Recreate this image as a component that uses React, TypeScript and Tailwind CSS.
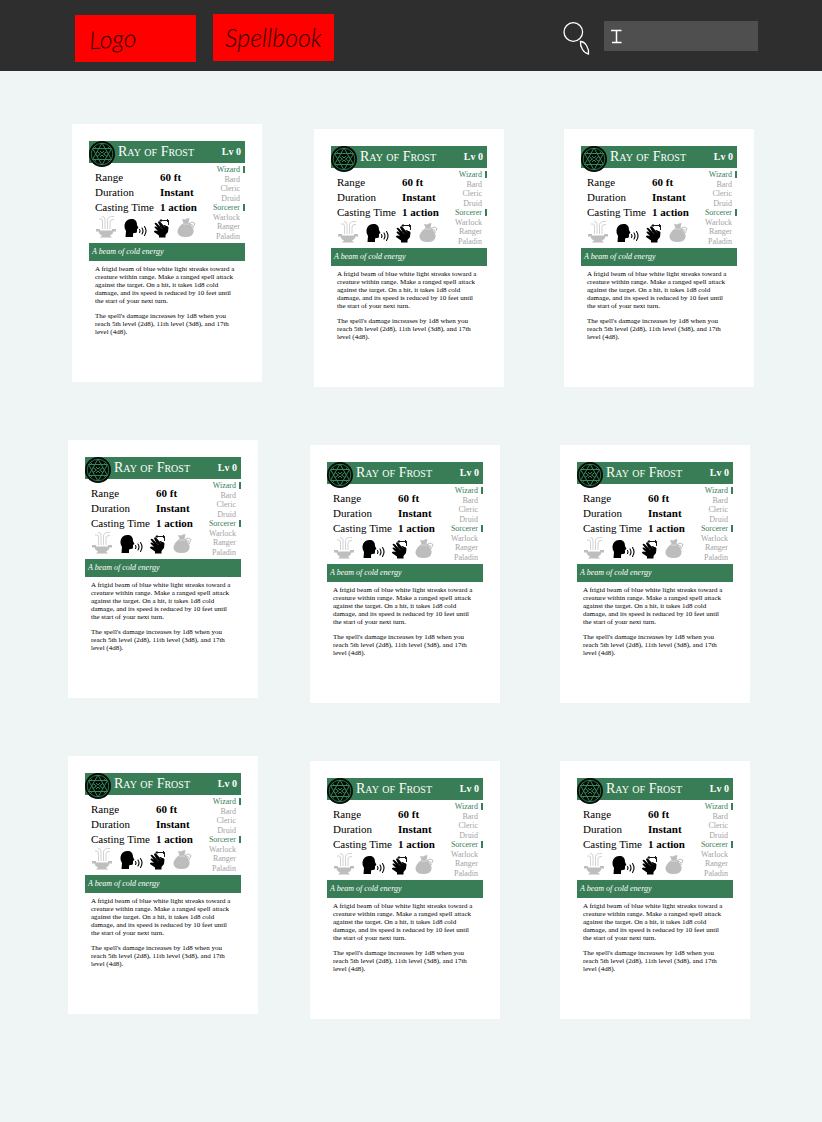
import React from "react";

type Spell = {
  name: string;
  level: number;
  facts: [string, string][];
  classes: { name: string; active: boolean }[];
  tagline: string;
  description: string[];
};

const activeClasses = ["Wizard", "Sorcerer"];

const rayOfFrost: Spell = {
  name: "Ray of Frost",
  level: 0,
  facts: [
    ["Range", "60 ft"],
    ["Duration", "Instant"],
    ["Casting Time", "1 action"],
  ],
  classes: ["Wizard", "Bard", "Cleric", "Druid", "Sorcerer", "Warlock", "Ranger", "Paladin"].map(
    (name) => ({ name, active: activeClasses.includes(name) }),
  ),
  tagline: "A beam of cold energy",
  description: [
    "A frigid beam of blue white light streaks toward a\ncreature within range. Make a ranged spell attack\nagainst the target. On a hit, it takes 1d8 cold\ndamage, and its speed is reduced by 10 feet until\nthe start of your next turn.",
    "The spell's damage increases by 1d8 when you\nreach 5th level (2d8), 11th level (3d8), and 17th\nlevel (4d8).",
  ],
};

function Emblem() {
  return (
    <svg viewBox="0 0 26 26" className="h-[26px] w-[26px] shrink-0" aria-hidden="true">
      <circle cx="13" cy="13" r="13" fill="#050c08" />
      <g fill="none" stroke="#37865a" strokeWidth="1">
        <circle cx="13" cy="13" r="10.8" strokeWidth="0.8" />
        <path d="M13 2L22.500 18.500H3.500ZM13 24L3.500 7.500H22.500Z" />
        <path d="M8 10.500L11.500 13L8 15.500M18 10.500L14.500 13L18 15.500M11 10L13 12L15 10M11 16L13 14L15 16" />
        <path d="M5 5L7 7M21 5L19 7M5 21L7 19M21 21L19 19" strokeWidth="0.8" />
      </g>
    </svg>
  );
}

function BowlIcon() {
  return (
    <svg viewBox="0 0 22 23" className="h-[23px] w-[22px]" aria-hidden="true">
      <path d="M1 14H5V15.500H17V14H21V16.500H18.500Q18 19.500 15 20.500L17 22.500H5L7 20.500Q4 19.500 3.500 16.500H1Z" fill="#bebebe" />
      <g fill="none" stroke="#d2d2d2" strokeWidth="1">
        <path d="M7.500 14V6Q7.500 3 4 4M10 14V4Q10 1.500 7 1.500M12.500 14V4.500Q13 1 19 1.500M15 14V7Q15 4 19 4.500" />
      </g>
    </svg>
  );
}

function VoiceIcon() {
  return (
    <svg viewBox="0 0 23 20" className="h-[20px] w-[23px]" aria-hidden="true">
      <path d="M7 1C11 .5 13 3 13 7L14.500 10L13 11V13.500Q13 15.500 9.500 15L9 16.500V19H1.500L2 13Q0 10.500 .5 7Q1.500 1.500 7 1Z" fill="#000" />
      <g fill="none" stroke="#000" strokeWidth="1.100" strokeLinecap="round">
        <path d="M15.500 11.500Q16.500 13 15.500 14.500M18 10Q20 13 18 16M20.500 8.500Q23.500 13 20.500 17.500" />
      </g>
    </svg>
  );
}

function HandIcon() {
  return (
    <svg viewBox="0 0 17 20" className="h-[20px] w-[17px]" aria-hidden="true">
      <path d="M1.500 5.500Q2.500 4 4 5.500L7.500 9L5 4.500Q5.500 2.500 7 3.500L10.500 7.500Q12 6.500 13 8Q15 7.500 15.500 9.500L15 14L12.500 17V19.500H6V17.500L1 14Q.5 12.500 2.500 12.500L5 13L1.500 9.500Q1.500 8 3 8.500L5 10Z" fill="#000" />
      <path d="M7 2.500H15.500M8.500 1L7 2.500L8.500 4M14 1L15.500 2.500L14 4M15.500 3V7" fill="none" stroke="#000" strokeWidth="0.900" />
      <path d="M7.500 9L9.500 11M10.500 7.500L12 9.500" fill="none" stroke="#888" strokeWidth="0.500" />
    </svg>
  );
}

function PouchIcon() {
  return (
    <svg viewBox="0 0 20 21" className="h-[21px] w-[20px]" aria-hidden="true">
      <path d="M5 2L8 2.500L10 1.500L12.500 1L11.500 6Q17 10 16.500 15Q16 20 8.500 20T.5 15Q.5 10 6.500 6Z" fill="#bdbdbd" />
      <path d="M6 6.500H12L15 5L18 6.500L17 9M12 6.500L15.500 8L16.500 11" fill="none" stroke="#b5b5b5" strokeWidth="0.900" />
      <path d="M6 7H12" stroke="#ececec" strokeWidth="0.700" />
    </svg>
  );
}

function SpellCard({ spell, className = "" }: { spell: Spell; className?: string }) {
  return (
    <article
      className={`flex min-h-[258px] w-[190px] shrink-0 flex-col bg-white px-[17px] pt-[17px] font-['Liberation_Serif',serif] ${className}`}
    >
      <header className="flex h-[22px] items-start bg-[#397d56] text-white">
        <Emblem />
        <h2 className="ml-[3px] flex-1 whitespace-nowrap text-[14px] leading-[21px] [font-variant-caps:small-caps]">
          {spell.name}
        </h2>
        <span className="pr-1 text-[10px] font-bold leading-[21px]">Lv {spell.level}</span>
      </header>

      <div className="flex h-[80px] justify-between">
        <div className="flex flex-col pl-[6px]">
          <dl className="mt-[7px] grid grid-cols-[65px_auto] text-[11px] leading-[15px] text-black">
            {spell.facts.map(([label, value]) => (
              <React.Fragment key={label}>
                <dt className="whitespace-nowrap">{label}</dt>
                <dd className="whitespace-nowrap font-bold">{value}</dd>
              </React.Fragment>
            ))}
          </dl>
          <div className="flex w-[102px] items-end justify-between">
            <BowlIcon />
            <VoiceIcon />
            <HandIcon />
            <PouchIcon />
          </div>
        </div>
        <ul className="flex flex-col items-end pb-[2px] pt-[2px] text-[8px]">
          {spell.classes.map(({ name, active }) => (
            <li
              key={name}
              className={
                active
                  ? "flex flex-1 items-center gap-[3px] leading-[9px] text-[#397d56]"
                  : "flex flex-1 items-center gap-[3px] leading-[9px] text-[#a3a3a3]"
              }
            >
              {name}
              <span className={active ? "h-[7px] w-[2px] bg-[#397d56]" : "h-[7px] w-[2px]"} />
            </li>
          ))}
        </ul>
      </div>

      <p className="h-[18px] bg-[#397d56] pl-[3px] text-[8px] italic leading-[18px] text-white">
        {spell.tagline}
      </p>

      <div className="flex flex-col gap-[7px] whitespace-pre pl-[6px] pt-1 text-[7px] leading-[8px] text-black">
        {spell.description.map((paragraph) => (
          <p key={paragraph}>{paragraph}</p>
        ))}
      </div>
    </article>
  );
}

function TopBar() {
  return (
    <header className="flex h-[71px] items-start justify-between bg-[#2e2e2e] pl-[75px] pr-16 font-['Lato',sans-serif]">
      <nav className="flex gap-[17px] pt-[14px]">
        <a href="#home" className="mt-px flex h-[47px] w-[121px] items-center bg-[#ff0000] pl-[14px] text-[25px] font-light italic text-[#300000]">
          <span className="-rotate-3">Logo</span>
        </a>
        <a href="#spellbook" className="flex h-[47px] w-[121px] items-center justify-center bg-[#ff0000] text-[25px] font-light italic text-[#300000]">
          Spellbook
        </a>
      </nav>
      <form role="search" className="flex items-start gap-[14px] pt-[21px]">
        <svg viewBox="0 0 27 35" className="h-[35px] w-[27px]" fill="none" stroke="#fff" strokeWidth="1.300" aria-hidden="true">
          <circle cx="10.300" cy="11" r="9.300" />
          <path d="M17.500 20.500Q21 20.500 23.500 24.500T25.500 33Q22 32.500 19.500 28.500T17.500 20.500Z" />
        </svg>
        <div className="relative">
          <input
            type="text"
            aria-label="Search spells"
            className="block h-[30px] w-[154px] bg-[#4f4f4f] px-2 text-sm text-white outline-none"
          />
          <svg viewBox="0 0 11 15" className="pointer-events-none absolute left-[7px] top-2 h-[15px] w-[11px]" fill="none" stroke="#fff" strokeWidth="1.500" aria-hidden="true">
            <path d="M0 1.500H10.500M5.500 1.500V13.500M1 13.500H10.500" />
          </svg>
        </div>
      </form>
    </header>
  );
}

function SpellRow({ className }: { className: string }) {
  return (
    <div className={`flex items-start justify-between ${className}`}>
      <SpellCard spell={rayOfFrost} />
      <SpellCard spell={rayOfFrost} className="mr-2 mt-[5px]" />
      <SpellCard spell={rayOfFrost} className="mt-[5px]" />
    </div>
  );
}

export default function App() {
  return (
    <div className="min-h-screen bg-[#eff5f4]">
      <TopBar />
      <main className="flex flex-col gap-[53px] px-[68px] pb-16 pt-[53px]">
        <SpellRow className="pl-1" />
        <SpellRow className="pr-1" />
        <SpellRow className="pr-1" />
      </main>
    </div>
  );
}
